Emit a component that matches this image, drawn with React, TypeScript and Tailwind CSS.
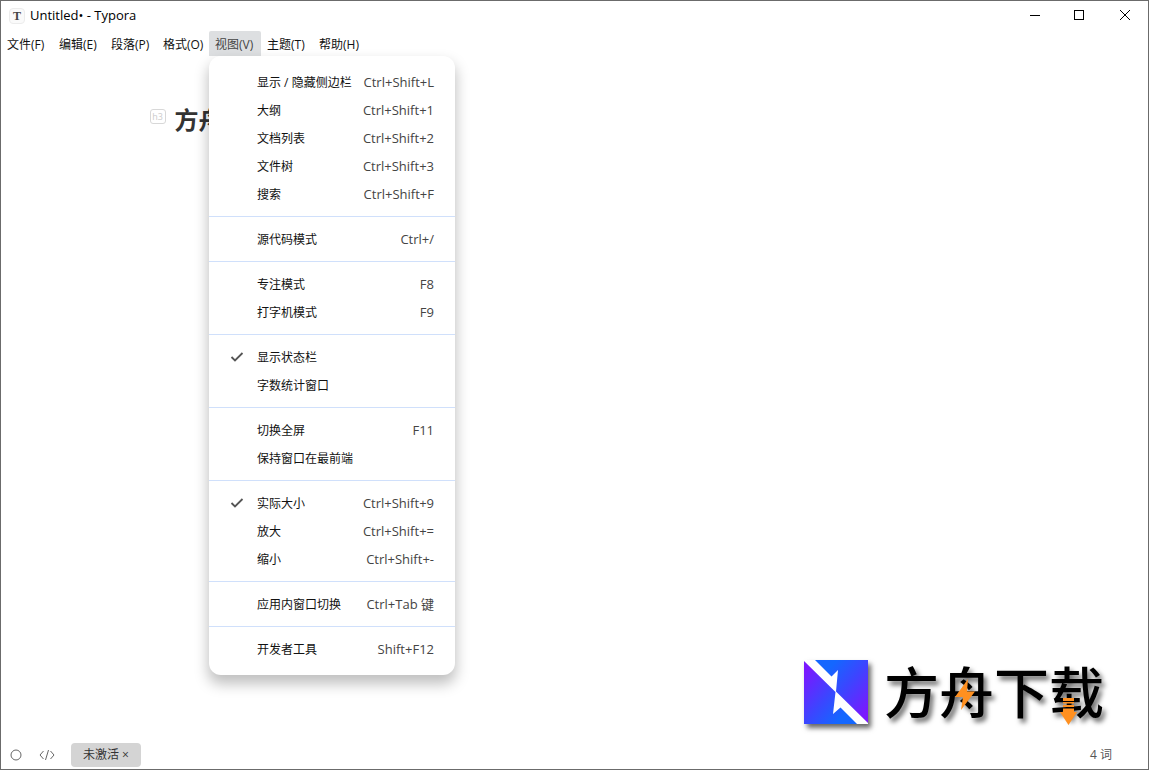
import { useState } from "react";

type MenuEntry = {
    label: string;
    shortcut?: string;
    checked?: boolean;
};

const menus = [
    "文件(F)",
    "编辑(E)",
    "段落(P)",
    "格式(O)",
    "视图(V)",
    "主题(T)",
    "帮助(H)",
];

const viewMenu: MenuEntry[][] = [
    [
        { label: "显示 / 隐藏侧边栏", shortcut: "Ctrl+Shift+L" },
        { label: "大纲", shortcut: "Ctrl+Shift+1" },
        { label: "文档列表", shortcut: "Ctrl+Shift+2" },
        { label: "文件树", shortcut: "Ctrl+Shift+3" },
        { label: "搜索", shortcut: "Ctrl+Shift+F" },
    ],
    [{ label: "源代码模式", shortcut: "Ctrl+/" }],
    [
        { label: "专注模式", shortcut: "F8" },
        { label: "打字机模式", shortcut: "F9" },
    ],
    [{ label: "显示状态栏", checked: true }, { label: "字数统计窗口" }],
    [
        { label: "切换全屏", shortcut: "F11" },
        { label: "保持窗口在最前端" },
    ],
    [
        { label: "实际大小", shortcut: "Ctrl+Shift+9", checked: true },
        { label: "放大", shortcut: "Ctrl+Shift+=" },
        { label: "缩小", shortcut: "Ctrl+Shift+-" },
    ],
    [{ label: "应用内窗口切换", shortcut: "Ctrl+Tab 键" }],
    [{ label: "开发者工具", shortcut: "Shift+F12" }],
];

const TitleBar = () => (
    <header className="flex h-[30px] items-center pl-2">
        <span className="flex size-4 items-center justify-center rounded-sm border border-[#ececec] bg-[#fafafa] font-['Liberation_Serif',serif] text-xs leading-none font-bold text-[#444]">
            T
        </span>
        <h1 className="ml-[5px] grow text-[13px] text-black">
            Untitled• - Typora
        </h1>
        <button
            className="flex h-full w-[45px] items-center justify-center pb-0.5"
            aria-label="Minimize"
        >
            <svg width="10" height="10" shapeRendering="crispEdges">
                <path d="M0 5.5h10" stroke="#000" />
            </svg>
        </button>
        <button
            className="flex h-full w-[45px] items-center justify-center pb-0.5"
            aria-label="Maximize"
        >
            <svg width="11" height="11" shapeRendering="crispEdges">
                <path d="M.5.5h9v9h-9z" fill="none" stroke="#000" />
            </svg>
        </button>
        <button
            className="flex h-full w-[46px] items-center justify-center pb-0.5"
            aria-label="Close"
        >
            <svg width="10" height="10">
                <path d="M0 0l10 10M10 0L0 10" stroke="#000" />
            </svg>
        </button>
    </header>
);

const Dropdown = () => (
    <div
        className="absolute top-full left-0 z-10 w-[246px] divide-y divide-[#d0e0fb] rounded-xl bg-white py-1 shadow-[0_8px_14px_1px_rgba(0,0,0,0.25)]"
        role="menu"
    >
        {viewMenu.map((group, index) => (
            <div className="py-2" key={index}>
                {group.map((item) => (
                    <button
                        className="flex h-7 w-full items-center pr-[21px] pl-5 whitespace-nowrap"
                        key={item.label}
                        role="menuitem"
                    >
                        <span className="flex w-7 shrink-0">
                            {item.checked && (
                                <svg
                                    width="16"
                                    height="16"
                                    viewBox="0 0 16 16"
                                    fill="none"
                                    stroke="#555"
                                    strokeWidth="1.8"
                                >
                                    <path d="M2.5 8l3.500 3.500L13.500 4" />
                                </svg>
                            )}
                        </span>
                        <span className="grow pt-0.5 text-left text-[#111]">
                            {item.label}
                        </span>
                        <span className="pt-0.5 text-[13px] text-[#444]">
                            {item.shortcut}
                        </span>
                    </button>
                ))}
            </div>
        ))}
    </div>
);

const MenuBar = () => {
    const [open, setOpen] = useState("视图(V)");
    return (
        <nav className="flex h-[25px]">
            {menus.map((menu) => (
                <div className="relative" key={menu}>
                    <button
                        className={`h-full w-13 rounded-t-xs pt-0.5 pl-[6px] text-left whitespace-nowrap ${
                            open === menu
                                ? "bg-[#dddfe1] text-[#444]"
                                : "text-[#111]"
                        }`}
                        onClick={() => setOpen(open === menu ? "" : menu)}
                    >
                        {menu}
                    </button>
                    {menu === "视图(V)" && open === menu && <Dropdown />}
                </div>
            ))}
        </nav>
    );
};

const Brand = () => (
    <div className="absolute right-[44px] bottom-4 flex items-start gap-4">
        <svg
            className="size-16 shadow-[3px_4px_5px_rgba(0,0,0,0.6)]"
            viewBox="0 0 64 64"
        >
            <defs>
                <linearGradient id="upper" x1="0" y1="0" x2="1" y2="1">
                    <stop offset="0.2" stopColor="#1467ff" />
                    <stop offset="0.5" stopColor="#3b46ff" />
                    <stop offset="0.9" stopColor="#7a18ff" />
                </linearGradient>
                <linearGradient id="lower" x1="0" y1="0" x2="1" y2="1">
                    <stop offset="0.1" stopColor="#7a18ff" />
                    <stop offset="0.5" stopColor="#3b46ff" />
                    <stop offset="0.8" stopColor="#1467ff" />
                </linearGradient>
            </defs>
            <path d="M0 0h64v64H0z" fill="#fff" />
            <path d="M11 0H64V63L32 31.500L34 10L27.500 16.500z" fill="url(#upper)" />
            <path d="M0 1L31.500 32L29 54L36.500 47.500L53 64H0z" fill="url(#lower)" />
        </svg>
        <div className="relative font-['Noto_Sans_CJK_SC',sans-serif] text-[55px] leading-[58px] font-medium whitespace-nowrap text-black [text-shadow:3px_4px_5px_rgba(0,0,0,0.6)]">
            方舟下载
            <svg
                className="absolute top-[19px] left-[71px]"
                width="20"
                height="31"
                viewBox="0 0 20 31"
                fill="#ff9020"
            >
                <path d="M13 0L0 18h8L6 31L20 12.500H12z" />
            </svg>
            <svg
                className="absolute top-[38px] left-[176px]"
                width="17"
                height="27"
                viewBox="0 0 17 27"
                fill="#ff9020"
            >
                <path d="M3 0h11v3H3zM3 4h11v1.500H3zM3 7h11v2H3zM3 10.500h11V14h3L8.500 27L0 14h3z" />
            </svg>
        </div>
    </div>
);

const StatusBar = () => (
    <footer className="flex h-[29px] items-center pr-9 pl-[9px] text-[#555]">
        <button className="flex" aria-label="Toggle sidebar">
            <svg width="12" height="12" fill="none" stroke="#666">
                <circle cx="6" cy="6" r="5" />
            </svg>
        </button>
        <button className="ml-[17px] flex" aria-label="Source code mode">
            <svg width="16" height="12" fill="none" stroke="#666">
                <path d="M4.500 2L1 6l3.500 4M11.500 2L15 6l-3.500 4M9.500 1l-3 10" />
            </svg>
        </button>
        <button className="ml-4 h-6 w-[70px] rounded-sm bg-[#d4d4d4] text-[#333]">
            未激活 ×
        </button>
        <span className="ml-auto">4 词</span>
    </footer>
);

const App = () => (
    <div className="flex min-h-screen flex-col border border-[#6b6b6b] bg-white font-['Open_Sans','Noto_Sans_CJK_SC',sans-serif] text-xs">
        <TitleBar />
        <MenuBar />
        <main className="relative flex grow flex-col">
            <article className="mx-auto w-full max-w-[800px] pt-12">
                <h3 className="relative text-2xl font-bold text-[#333]">
                    <span className="absolute top-[5px] -left-[25px] flex h-[15px] w-4 items-center justify-center rounded-[3px] border border-[#d8d8d8] text-[9px] leading-none font-normal text-[#ccc]">
                        h3
                    </span>
                    方舟
                </h3>
            </article>
            <Brand />
        </main>
        <StatusBar />
    </div>
);

export default App;
